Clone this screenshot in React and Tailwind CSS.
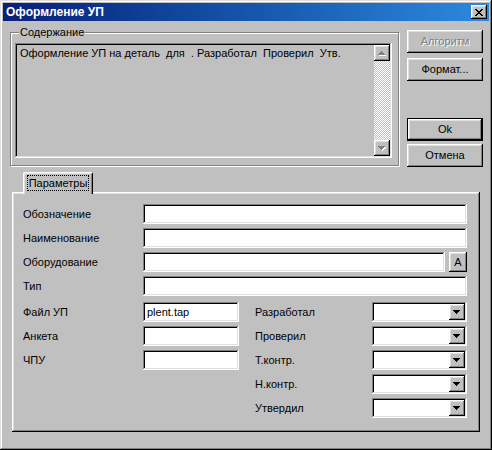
import React from 'react';

const raised = 'shadow-[inset_-1px_-1px_0_#000,inset_1px_1px_0_#fff,inset_-2px_-2px_0_#808080,inset_2px_2px_0_#dfdfdf]';
const sunken = 'shadow-[inset_-1px_-1px_0_#fff,inset_1px_1px_0_#808080,inset_-2px_-2px_0_#dfdfdf,inset_2px_2px_0_#000]';

const xGlyph = ['11....11', '.11..11.', '..1111..', '...11...', '..1111..', '.11..11.', '11....11'];

function CloseButton() {
  return (
    <div className={`w-[16px] h-[14px] bg-[#c0c0c0] flex items-center justify-center ${raised}`}>
      <svg width="8" height="7" shapeRendering="crispEdges">
        {xGlyph.map((row, y) => row.split('').map((c, x) => (c === '1' ? <rect key={`${x}-${y}`} x={x} y={y} width="1" height="1" fill="#000" /> : null)))}
      </svg>
    </div>
  );
}

function Arrow({ up, disabled }) {
  const d = up ? 'M3 0h1v1h1v1h1v1h1v1h-7v-1h1v-1h1v-1h1z' : 'M0 0h7v1h-1v1h-1v1h-1v1h-1v-1h-1v-1h-1v-1h-1z';
  return (
    <svg width="8" height="5" shapeRendering="crispEdges">
      {disabled && <path d={d} fill="#fff" transform="translate(1 1)" />}
      <path d={d} fill={disabled ? '#808080' : '#000'} />
    </svg>
  );
}

function Button({ children, disabled, isDefault, className = '' }) {
  return (
    <div className={`w-[76px] h-[23px] flex items-center justify-center bg-[#c0c0c0] ${isDefault ? 'border border-black' : ''} ${raised} ${className}`}>
      <span className={disabled ? 'text-[#808080] [text-shadow:1px_1px_0_#fff]' : 'text-black'}>{children}</span>
    </div>
  );
}

function Field({ w, text }) {
  return (
    <div className={`h-[20px] bg-white flex items-center pl-[4px] ${sunken}`} style={{ width: w }}>
      {text && <span className="text-black">{text}</span>}
    </div>
  );
}

function Combo() {
  return (
    <div className={`h-[20px] w-[95px] bg-white flex justify-end p-[2px] ${sunken}`}>
      <div className={`w-[16px] h-full bg-[#c0c0c0] flex items-center justify-center ${raised}`}>
        <Arrow />
      </div>
    </div>
  );
}

function Row({ label, labelW = 120, children }) {
  return (
    <div className="flex items-center h-[20px]">
      <span className="shrink-0" style={{ width: labelW }}>{label}</span>
      {children}
    </div>
  );
}

export default function App() {
  return (
    <div className="w-[492px] h-[450px] bg-[#c0c0c0] p-[3px] text-[11px] leading-[13px] text-black font-['Liberation_Sans',Arial,sans-serif] shadow-[inset_-1px_-1px_0_#000,inset_1px_1px_0_#dfdfdf,inset_-2px_-2px_0_#808080,inset_2px_2px_0_#fff]">
      <div className="h-[18px] flex items-center justify-between pl-[3px] pr-[2px] bg-linear-to-r from-[#0a1f78] to-[#2c8ae0]">
        <span className="text-white font-bold text-[12px]">Оформление УП</span>
        <CloseButton />
      </div>

      <div className="pl-[7px] pt-[9px]">
        <div className="flex">
          <div className="relative mt-[2px] w-[389px] h-[134px] border border-[#808080] shadow-[1px_1px_0_#fff,inset_1px_1px_0_#fff]">
            <span className="absolute left-[8px] -top-[7px] px-[1px] bg-[#c0c0c0]">Содержание</span>
            <div className={`ml-[4px] mt-[10px] w-[377px] h-[115px] flex p-[2px] ${sunken}`}>
              <div className="flex-1 pl-[3px] pt-[2px] whitespace-pre">Оформление УП на деталь  для  . Разработал  Проверил  Утв.</div>
              <div className="w-[16px] flex flex-col">
                <div className={`h-[16px] bg-[#c0c0c0] flex items-center justify-center ${raised}`}>
                  <Arrow up disabled />
                </div>
                <div className="flex-1 bg-[image:repeating-conic-gradient(#fff_0%_25%,#c0c0c0_0%_50%)] bg-[length:2px_2px]" />
                <div className={`h-[16px] bg-[#c0c0c0] flex items-center justify-center ${raised}`}>
                  <Arrow disabled />
                </div>
              </div>
            </div>
          </div>

          <div className="ml-[8px] flex flex-col">
            <Button disabled>Алгоритм</Button>
            <Button className="mt-[5px]">Формат...</Button>
            <Button isDefault className="mt-[37px]">Ok</Button>
            <Button className="mt-[3px]">Отмена</Button>
          </div>
        </div>

        <div className="relative z-10 ml-[13px] mt-[5px] -mb-[2px] w-[70px] h-[22px] bg-[#c0c0c0] rounded-t-[2px] flex items-center justify-center shadow-[inset_1px_1px_0_#fff,inset_-1px_0_0_#000,inset_2px_2px_0_#dfdfdf,inset_-2px_0_0_#808080]">
          <span className="border border-dotted border-black px-[1px] leading-[14px]">Параметры</span>
        </div>

        <div className="ml-[2px] w-[468px] h-[240px] pl-[11px] pt-[12px] shadow-[inset_-1px_-1px_0_#000,inset_1px_1px_0_#fff,inset_-2px_-2px_0_#808080,inset_2px_2px_0_#dfdfdf]">
          <div className="flex flex-col gap-[4px]">
            <Row label="Обозначение"><Field w={324} /></Row>
            <Row label="Наименование"><Field w={324} /></Row>
            <Row label="Оборудование">
              <Field w={302} />
              <div className={`ml-[4px] w-[18px] h-[20px] bg-[#c0c0c0] flex items-center justify-center ${raised}`}>А</div>
            </Row>
            <Row label="Тип"><Field w={324} /></Row>
          </div>

          <div className="flex mt-[6px]">
            <div className="flex flex-col gap-[4px]">
              <Row label="Файл УП"><Field w={96} text="plent.tap" /></Row>
              <Row label="Анкета"><Field w={96} /></Row>
              <Row label="ЧПУ"><Field w={96} /></Row>
            </div>
            <div className="ml-[16px] flex flex-col gap-[4px]">
              <Row label="Разработал" labelW={117}><Combo /></Row>
              <Row label="Проверил" labelW={117}><Combo /></Row>
              <Row label="Т.контр." labelW={117}><Combo /></Row>
              <Row label="Н.контр." labelW={117}><Combo /></Row>
              <Row label="Утвердил" labelW={117}><Combo /></Row>
            </div>
          </div>
        </div>
      </div>
    </div>
  );
}
